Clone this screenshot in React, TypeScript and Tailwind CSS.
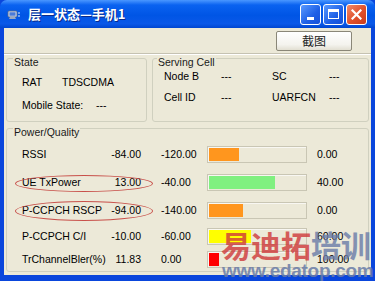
import React from 'react';

type Row = {
    label: string;
    value: string;
    min: string;
    max: string;
    fill: number;
    color: string;
    h: string;
};

const rows: Row[] = [
    { label: 'RSSI', value: '-84.00', min: '-120.00', max: '0.00', fill: 30, color: 'bg-[#ff961e]', h: 'h-[28px]' },
    { label: 'UE TxPower', value: '13.00', min: '-40.00', max: '40.00', fill: 66, color: 'bg-[#80f080]', h: 'h-[28px]' },
    { label: 'P-CCPCH RSCP', value: '-94.00', min: '-140.00', max: '0.00', fill: 34, color: 'bg-[#ff961e]', h: 'h-[28px]' },
    { label: 'P-CCPCH C/I', value: '-10.00', min: '-60.00', max: '60.00', fill: 42, color: 'bg-[#ffff00]', h: 'h-[24px]' },
    { label: 'TrChannelBler(%)', value: '11.83', min: '0.00', max: '100.00', fill: 10, color: 'bg-[#ff0000]', h: 'h-[22px]' },
];

const WinIcon = () => (
    <svg width="14" height="12" viewBox="0 0 14 12">
        <rect x="1" y="3" width="9" height="6" rx="1" fill="#c8d4e8" stroke="#5a6a88" strokeWidth="0.8" />
        <rect x="2.5" y="4.3" width="6" height="3.4" fill="#4a7ad8" />
        <path d="M3 9 L8 9 L9 11 L2 11 Z" fill="#9aa8c0" />
        <circle cx="12" cy="5" r="0.8" fill="#fff" />
        <circle cx="12" cy="8" r="0.8" fill="#fff" />
    </svg>
);

const Legend = ({ text, ml }: { text: string; ml: string }) => (
    <span className={`-mt-[3px] ${ml} self-start bg-[#ece9d8] px-[1px] leading-[13px] text-[#1a1a1a]`}>
        {text}
    </span>
);

export default function App() {
    return (
        <div className="relative w-[375px] h-[281px] overflow-hidden bg-[#0a46dc] font-['Liberation_Sans',Arial,sans-serif] text-[10.5px] text-black">
            {/* title bar */}
            <div className="flex h-[28px] items-center rounded-t-[7px] bg-[linear-gradient(to_bottom,#4a97ff_0%,#0a62f0_18%,#0055e5_55%,#0a58e8_85%,#0046d0_100%)] pl-[7px] pr-[8px]">
                <WinIcon />
                <span className="ml-[7px] font-['Noto_Sans_CJK_SC',sans-serif] text-[13px] font-bold leading-[16px] text-white [text-shadow:1px_1px_0_#0a2a8a]">
                    层一状态—手机1
                </span>
                <div className="ml-auto flex gap-[2px]">
                    <div className="flex h-[21px] w-[21px] items-end justify-center rounded-[3px] border border-white bg-[linear-gradient(135deg,#5a9aff,#1d5fe6_60%,#1650d8)] pb-[4px]">
                        <div className="h-[3px] w-[7px] bg-white" />
                    </div>
                    <div className="flex h-[21px] w-[21px] items-center justify-center rounded-[3px] border border-white bg-[linear-gradient(135deg,#5a9aff,#1d5fe6_60%,#1650d8)]">
                        <div className="h-[10px] w-[11px] border border-t-[3px] border-white" />
                    </div>
                    <div className="flex h-[21px] w-[21px] items-center justify-center rounded-[3px] border border-white bg-[linear-gradient(135deg,#f08a6a,#e0502b_55%,#c83c1c)]">
                        <svg width="11" height="11" viewBox="0 0 11 11">
                            <path d="M1.5 1.5 L9.5 9.5 M9.5 1.5 L1.5 9.5" stroke="white" strokeWidth="2.2" strokeLinecap="square" />
                        </svg>
                    </div>
                </div>
            </div>

            {/* window body */}
            <div className="mx-[4px] flex h-[247px] flex-col bg-[#ece9d8]">
                <div className="flex h-[25px] justify-end pr-[19px] pt-[3px]">
                    <button className="flex h-[20px] w-[76px] items-center justify-center rounded-[2px] border border-[#8a8778] bg-[linear-gradient(to_bottom,#ffffff,#f4f3ee_70%,#e2dfd2)] font-['Noto_Sans_CJK_SC',sans-serif] text-[12px] leading-[14px] text-[#222]">
                        截图
                    </button>
                </div>
                <div className="h-[2px] border-t border-[#c5c2b2] bg-white" />

                <div className="mt-[3px] flex">
                    <div className="ml-[2px] flex h-[64px] w-[141px] flex-col rounded-[3px] border border-[#d0d0bf]">
                        <Legend text="State" ml="ml-[6px]" />
                        <div className="mt-[7px] flex pl-[15px] leading-[13px]">
                            <span className="w-[40px]">RAT</span>
                            <span>TDSCDMA</span>
                        </div>
                        <div className="mt-[10px] flex pl-[15px] leading-[13px]">
                            <span className="w-[74px]">Mobile State:</span>
                            <span>---</span>
                        </div>
                    </div>
                    <div className="ml-[5px] flex h-[64px] w-[217px] flex-col rounded-[3px] border border-[#d0d0bf]">
                        <Legend text="Serving Cell" ml="ml-[4px]" />
                        <div className="mt-[1px] flex pl-[11px] leading-[13px]">
                            <span className="w-[57px]">Node B</span>
                            <span className="w-[51px]">---</span>
                            <span className="w-[57px]">SC</span>
                            <span>---</span>
                        </div>
                        <div className="mt-[8px] flex pl-[11px] leading-[13px]">
                            <span className="w-[57px]">Cell ID</span>
                            <span className="w-[51px]">---</span>
                            <span className="w-[57px]">UARFCN</span>
                            <span>---</span>
                        </div>
                    </div>
                </div>

                <div className="ml-[2px] mt-[6px] flex h-[144px] w-[363px] flex-col rounded-[3px] border border-[#d0d0bf]">
                    <Legend text="Power/Quality" ml="ml-[6px]" />
                    <div className="mt-[1px] flex flex-col">
                        {rows.map((r) => (
                            <div key={r.label} className={`flex ${r.h} items-center pl-[15px] leading-[13px] whitespace-nowrap`}>
                                <span className="w-[77px]">{r.label}</span>
                                <span className="w-[42px] text-right">{r.value}</span>
                                <span className="ml-[20px] w-[46px]">{r.min}</span>
                                <div className="flex h-[17px] w-[100px] items-stretch border border-[#c9c6b4] bg-[#ece9d8] p-[1px] shadow-[inset_1px_1px_0_#f8f7f2]">
                                    <div className={r.color} style={{ width: r.fill }} />
                                </div>
                                <span className="ml-[10px]">{r.max}</span>
                            </div>
                        ))}
                    </div>
                </div>
            </div>

            {/* annotation ellipses */}
            <div className="absolute left-[15px] top-[175px] h-[17px] w-[138px] rounded-[50%] border border-[#c8504a]" />
            <div className="absolute left-[15px] top-[201px] h-[20px] w-[138px] rounded-[50%] border border-[#c8504a]" />

            {/* watermark */}
            <div className="pointer-events-none absolute left-[221px] top-[229px] font-['Noto_Sans_CJK_SC',sans-serif] text-[30px] font-bold leading-[30px] opacity-80">
                <span className="text-[#cf3a3a]">易迪拓</span>
                <span className="text-[#6a7ca8]">培训</span>
            </div>
            <div className="pointer-events-none absolute left-[222px] top-[260px] font-['Liberation_Sans',sans-serif] text-[19px] font-bold leading-[21px] tracking-[-0.3px] text-[#6a7ca8] opacity-85">
                www.edatop.com
            </div>
        </div>
    );
}
